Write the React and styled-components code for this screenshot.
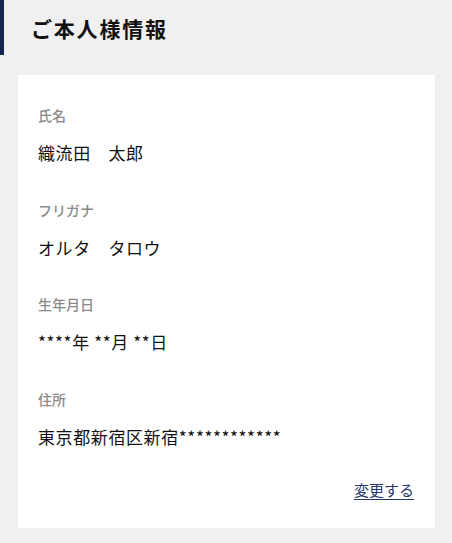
import React from "react";
import styled, { createGlobalStyle } from "styled-components";

const Global = createGlobalStyle`
  html, body { margin: 0; padding: 0; background: #f0f0f0; }
  body { font-family: "Noto Sans CJK JP", "Noto Sans", sans-serif; color: #111; }
`;

const Page = styled.div`
  width: 452px;
  height: 543px;
  background: #f0f0f0;
  box-sizing: border-box;
  overflow: hidden;
`;

const Header = styled.h1`
  margin: 0;
  height: 55px;
  display: flex;
  align-items: center;
  border-left: 4px solid #16244f;
  padding-left: 27px;
  font-size: 21px;
  font-weight: 700;
  letter-spacing: 1.8px;
  color: #111;
  box-sizing: border-box;
`;

const Card = styled.section`
  margin: 20px 17px 0 18px;
  background: #fff;
  padding: 30px 21px 28px 20px;
  display: flex;
  flex-direction: column;
`;

const FieldList = styled.div`
  display: flex;
  flex-direction: column;
  gap: 34.5px;
`;

const Field = styled.div`
  display: flex;
  flex-direction: column;
  gap: 16px;
`;

const Label = styled.div`
  font-size: 14px;
  line-height: 20px;
  font-weight: 500;
  color: #8a8a8a;
`;

const Value = styled.div`
  font-size: 17px;
  line-height: 24px;
  letter-spacing: 0.6px;
  color: #111;
`;

const Actions = styled.div`
  display: flex;
  justify-content: flex-end;
  margin-top: 31px;
`;

const Link = styled.a`
  font-size: 15px;
  line-height: 20px;
  color: #26366a;
  text-decoration: underline;
  text-underline-offset: 3px;
  cursor: pointer;
`;

const fields = [
  ["氏名", "織流田　太郎"],
  ["フリガナ", "オルタ　タロウ"],
  ["生年月日", "****年 **月 **日"],
  ["住所", "東京都新宿区新宿************"],
];

export default function App() {
  return (
    <Page>
      <Global />
      <Header>ご本人様情報</Header>
      <Card>
        <FieldList>
          {fields.map(([l, v]) => (
            <Field key={l}>
              <Label>{l}</Label>
              <Value>{v}</Value>
            </Field>
          ))}
        </FieldList>
        <Actions>
          <Link>変更する</Link>
        </Actions>
      </Card>
    </Page>
  );
}
